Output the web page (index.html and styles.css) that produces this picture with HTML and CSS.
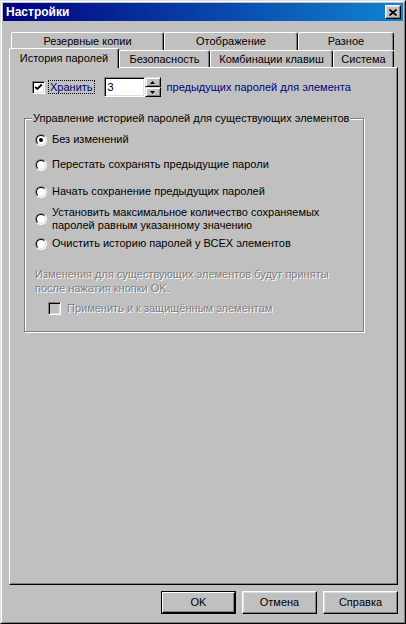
FILE: index.html
```html
<!DOCTYPE html>
<html lang="ru">
<head>
<meta charset="utf-8">
<title>Настройки</title>
<link rel="stylesheet" href="styles.css">
</head>
<body>
<div class="window">
  <div class="frame">
    <div class="titlebar">
      <span class="title">Настройки</span>
      <span class="close">
        <svg width="8" height="7" viewBox="0 0 8 7"><path d="M0.5 0.5 L7.5 6.5 M7.5 0.5 L0.5 6.5" stroke="#000" stroke-width="1.7" fill="none"/></svg>
      </span>
    </div>
    <div class="content">
      <div class="tabrow back">
        <div class="tab t-backup">Резервные копии</div>
        <div class="tab t-view">Отображение</div>
        <div class="tab t-misc">Разное</div>
      </div>
      <div class="tabrow front">
        <div class="tab t-history selected">История паролей</div>
        <div class="tab t-security">Безопасность</div>
        <div class="tab t-keys">Комбинации клавиш</div>
        <div class="tab t-system">Система</div>
      </div>
      <div class="panel">
        <div class="keep-row">
          <span class="checkbox">
            <svg width="9" height="9" viewBox="0 0 9 9"><path d="M1.2 3.8 L3.3 6 L7.8 1.5" stroke="#000" stroke-width="1.8" fill="none"/></svg>
          </span>
          <span class="keep-label">Хранить</span>
          <span class="spin">
            <span class="edit">3</span>
            <span class="spin-btns">
              <span class="spin-btn"><svg width="5" height="3" viewBox="0 0 5 3"><path d="M0 3 L2.5 0 L5 3 Z" fill="#000"/></svg></span>
              <span class="spin-btn"><svg width="5" height="3" viewBox="0 0 5 3"><path d="M0 0 L2.5 3 L5 0 Z" fill="#000"/></svg></span>
            </span>
          </span>
          <span class="keep-suffix">предыдущих паролей для элемента</span>
        </div>
        <div class="group">
          <div class="group-caption">Управление историей паролей для существующих элементов</div>
          <div class="radio-row r1"><span class="radio checked"><span class="radio-in"><span class="dot"></span></span></span><span class="radio-text">Без изменений</span></div>
          <div class="radio-row r2"><span class="radio"><span class="radio-in"></span></span><span class="radio-text">Перестать сохранять предыдущие пароли</span></div>
          <div class="radio-row r3"><span class="radio"><span class="radio-in"></span></span><span class="radio-text">Начать сохранение предыдущих паролей</span></div>
          <div class="radio-row r4"><span class="radio"><span class="radio-in"></span></span><span class="radio-text">Установить максимальное количество сохраняемых<br>паролей равным указанному значению</span></div>
          <div class="radio-row r5"><span class="radio"><span class="radio-in"></span></span><span class="radio-text">Очистить историю паролей у ВСЕХ элементов</span></div>
          <div class="note disabled">Изменения для существующих элементов будут приняты<br>после нажатия кнопки OK.</div>
          <div class="protected-row">
            <span class="checkbox off"></span>
            <span class="disabled">Применить и к защищённым элементам</span>
          </div>
        </div>
      </div>
      <div class="buttons">
        <div class="btn default"><span class="btn-in">OK</span></div>
        <div class="btn"><span class="btn-in">Отмена</span></div>
        <div class="btn"><span class="btn-in">Справка</span></div>
      </div>
    </div>
  </div>
</div>
</body>
</html>
```
FILE: styles.css
```css
* { box-sizing: border-box; }
html, body { margin: 0; padding: 0; }
body {
  width: 406px;
  height: 624px;
  background: #c0c0c0;
  font-family: "Liberation Sans", Arial, sans-serif;
  font-size: 11px;
  line-height: 13px;
  color: #000;
}
.window {
  width: 406px;
  height: 624px;
  border: 1px solid;
  border-color: #dfdfdf #000 #000 #dfdfdf;
  background: #c0c0c0;
}
.frame {
  height: 100%;
  border: 1px solid;
  border-color: #fff #808080 #808080 #fff;
  padding: 1px;
  display: flex;
  flex-direction: column;
}
.titlebar {
  height: 18px;
  flex: none;
  background: linear-gradient(to right, #000080, #1084d0);
  display: flex;
  align-items: center;
  justify-content: space-between;
  padding: 0 2px 0 3px;
}
.title {
  color: #fff;
  font-weight: bold;
  font-size: 12px;
}
.close {
  width: 16px;
  height: 14px;
  background: #c0c0c0;
  border: 1px solid;
  border-color: #fff #000 #000 #fff;
  box-shadow: inset -1px -1px #808080, inset 1px 1px #dfdfdf;
  display: flex;
  align-items: center;
  justify-content: center;
}
.content {
  flex: 1;
  padding: 11px 5px 0 6px;
  display: flex;
  flex-direction: column;
}
.tabrow {
  display: flex;
  margin-left: 2px;
  flex: none;
}
.tabrow.back { height: 18px; }
.tabrow.front { height: 17px; align-items: flex-start; }
.tab {
  height: 100%;
  border: 1px solid;
  border-bottom: none;
  border-color: #fff #000 transparent #fff;
  box-shadow: inset -1px 0 #808080;
  border-radius: 2px 3px 0 0;
  background: #c0c0c0;
  display: flex;
  align-items: center;
  justify-content: center;
  white-space: nowrap;
}
.t-backup { width: 153px; }
.t-view { width: 134px; }
.t-misc { width: 96px; }
.t-history { width: 108px; }
.t-security { width: 91px; }
.t-keys { width: 123px; }
.t-system { width: 61px; }
.tab.selected {
  position: relative;
  z-index: 1;
  width: 110px;
  height: 20px;
  margin: -2px 0 0 -2px;
  padding-bottom: 1px;
}
.panel {
  height: 518px;
  flex: none;
  border: 1px solid;
  border-color: #fff #000 #000 #fff;
  box-shadow: inset -1px -1px #808080;
  padding: 9px 0 0 22px;
}
.keep-row {
  display: flex;
  align-items: center;
  height: 20px;
}
.checkbox {
  width: 13px;
  height: 13px;
  flex: none;
  border: 1px solid;
  border-color: #808080 #fff #fff #808080;
  box-shadow: inset 1px 1px #000, inset -1px -1px #dfdfdf;
  background: #fff;
  display: flex;
  align-items: center;
  justify-content: center;
}
.checkbox.off { background: #c0c0c0; }
.keep-label {
  margin-left: 3px;
  padding: 0 1px;
  border: 1px dotted #000;
  color: #000080;
  line-height: 12px;
}
.spin {
  display: flex;
  margin-left: 9px;
  height: 20px;
}
.edit {
  width: 41px;
  height: 20px;
  border: 1px solid;
  border-color: #808080 #fff #fff #808080;
  box-shadow: inset 1px 1px #000, inset -1px -1px #dfdfdf;
  background: #fff;
  padding: 3px 0 0 3px;
}
.spin-btns {
  display: flex;
  flex-direction: column;
  width: 16px;
  height: 20px;
}
.spin-btn {
  height: 10px;
  border: 1px solid;
  border-color: #dfdfdf #000 #000 #dfdfdf;
  box-shadow: inset 1px 1px #fff, inset -1px -1px #808080;
  background: #c0c0c0;
  display: flex;
  align-items: center;
  justify-content: center;
}
.keep-suffix {
  margin-left: 6px;
  color: #000080;
}
.group {
  position: relative;
  width: 340px;
  height: 214px;
  margin: 21px 0 0 -8px;
  border: 1px solid #808080;
  box-shadow: inset 1px 1px #fff, 1px 1px #fff;
  padding: 14px 0 0 10px;
}
.group-caption {
  position: absolute;
  top: -7px;
  left: 7px;
  padding: 0 1px;
  background: #c0c0c0;
  white-space: nowrap;
}
.radio-row {
  display: flex;
  align-items: center;
}
.r2 { margin-top: 12px; }
.r3 { margin-top: 14px; }
.r4 { margin-top: 8px; }
.r5 { margin-top: 5px; }
.radio {
  width: 12px;
  height: 12px;
  flex: none;
  border-radius: 50%;
  border: 1px solid;
  border-color: #808080 #fff #fff #808080;
}
.radio-in {
  display: flex;
  align-items: center;
  justify-content: center;
  width: 10px;
  height: 10px;
  border-radius: 50%;
  border: 1px solid;
  border-color: #000 #dfdfdf #dfdfdf #000;
  background: #fff;
}
.dot {
  width: 4px;
  height: 4px;
  border-radius: 50%;
  background: #000;
}
.radio-text { margin-left: 5px; }
.disabled {
  color: #808080;
  text-shadow: 1px 1px 0 #fff;
}
.note {
  margin-top: 17px;
  line-height: 14px;
}
.protected-row {
  display: flex;
  align-items: center;
  margin: 7px 0 0 13px;
}
.protected-row .disabled { margin-left: 6px; }
.buttons {
  display: flex;
  justify-content: flex-end;
  gap: 6px;
  margin-top: 6px;
}
.btn {
  width: 75px;
  height: 23px;
  border: 1px solid;
  border-color: #fff #000 #000 #fff;
  box-shadow: inset -1px -1px #808080, inset 1px 1px #dfdfdf;
  display: flex;
}
.btn-in {
  flex: 1;
  display: flex;
  align-items: center;
  justify-content: center;
}
.btn.default {
  border-color: #000;
  box-shadow: none;
}
.btn.default .btn-in {
  border: 1px solid;
  border-color: #fff #000 #000 #fff;
  box-shadow: inset -1px -1px #808080;
}
```
